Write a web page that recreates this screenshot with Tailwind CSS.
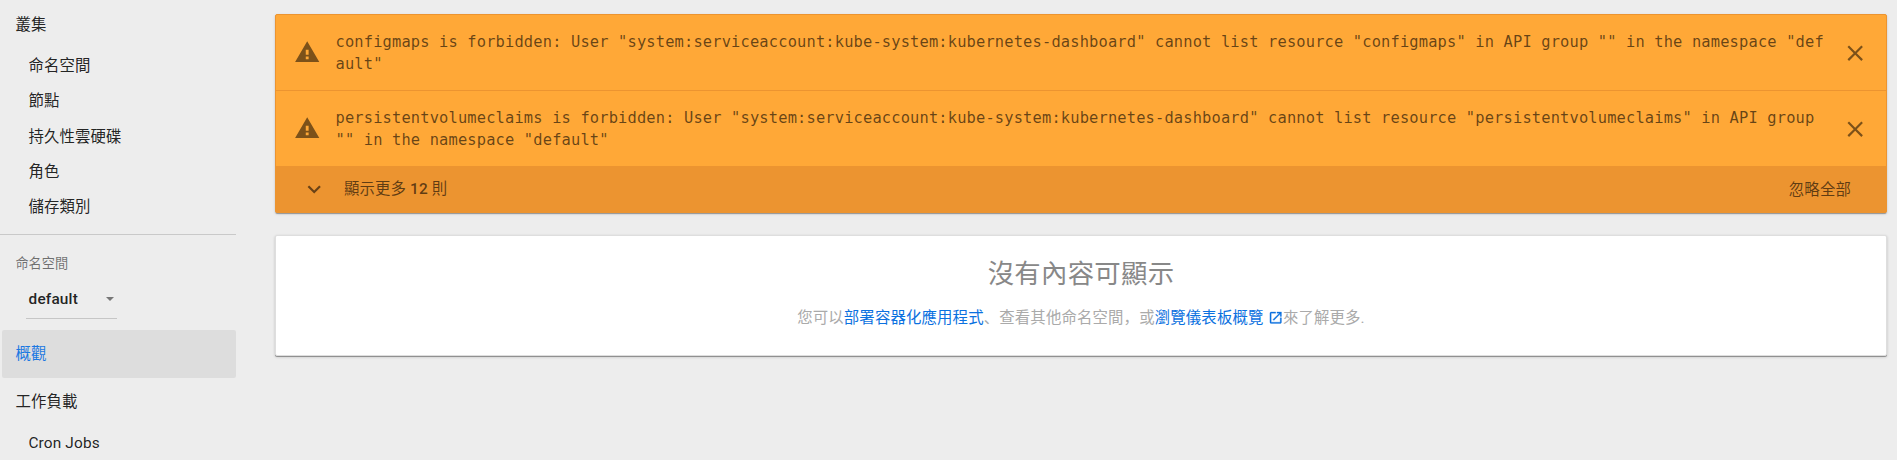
<!DOCTYPE html>
<html lang="zh">
<head>
<meta charset="utf-8">
<title>Kubernetes Dashboard</title>
<script src="https://cdn.jsdelivr.net/npm/@tailwindcss/browser@4"></script>
</head>
<body class="flex h-[460px] overflow-hidden bg-[#ededed] font-[Roboto,'Noto_Sans_CJK_SC',sans-serif] text-[15.4px] leading-[22px] tracking-[0.154px] text-black/87">
  <nav class="w-[236px] shrink-0">
    <a class="flex h-[48px] items-center pt-[2px] pl-[15.4px]">叢集</a>
    <a class="flex h-[35.2px] items-center pt-px pl-[28.4px]">命名空間</a>
    <a class="flex h-[35.2px] items-center pl-[28.4px]">節點</a>
    <a class="flex h-[35.2px] items-center pt-[2px] pl-[28.4px]">持久性雲硬碟</a>
    <a class="flex h-[35.2px] items-center pt-[2px] pl-[28.4px]">角色</a>
    <a class="flex h-[35.2px] items-center pt-[2px] pl-[28.4px]">儲存類別</a>
    <div class="mt-[10px] h-px bg-[#c9c9c9]"></div>
    <div class="mt-[18px] h-[22px] pl-[15.4px] text-[13.2px] tracking-normal text-black/54">命名空間</div>
    <div class="mt-[9px] ml-[26px] flex h-[35px] w-[91px] justify-between border-b border-[#c6c6c6] pt-[4px] pr-[3px] pl-[2.6px] font-medium">
      <span>default</span>
      <svg class="mt-[9px] h-[4px] w-[8px] fill-[#777]" viewBox="0 0 8 4"><path d="M0 0h8L4 4z"/></svg>
    </div>
    <a class="mt-[11px] ml-[2px] flex h-[48px] items-center rounded-[2px] bg-[#dddddd] pl-[13.4px] text-[#1a78e2]">概觀</a>
    <a class="flex h-[48px] items-center pl-[15.4px]">工作負載</a>
    <a class="flex h-[33.2px] items-center pl-[28.4px]">Cron Jobs</a>
  </nav>
  <main class="flex grow flex-col gap-[22px] pt-[14px] pr-[10px] pl-[39px]">
    <section class="h-[199px] rounded-[2px] border border-[#ec9430] bg-[#ffa837] text-black/60 shadow-[0_2px_1px_-1px_rgba(0,0,0,0.2),0_1px_1px_rgba(0,0,0,0.14),0_1px_3px_rgba(0,0,0,0.12)]">
      <div class="flex h-[76px] border-b border-[#ec9430]">
        <svg class="mt-[24.2px] ml-[17.9px] h-[26.4px] w-[26.4px] shrink-0 fill-[#7c5119]" viewBox="0 0 24 24"><path d="M1 21h22L12 2 1 21zm12.3-2.6h-2.6v-2.4h2.6v2.4zm0-4h-2.6v-4.6h2.6v4.6z"/></svg>
        <p class="mt-[16px] ml-[15.2px] w-[1489px] font-['DejaVu_Sans_Mono',monospace]">configmaps is forbidden: User "system:serviceaccount:kube-system:kubernetes-dashboard" cannot list resource "configmaps" in API group "" in the namespace "def<br>ault"</p>
        <svg class="mt-[24.5px] ml-[17.5px] h-[26.4px] w-[26.4px] shrink-0 fill-[#7c5119]" viewBox="0 0 24 24"><path d="M19 6.41L17.59 5 12 10.59 6.41 5 5 6.41 10.59 12 5 17.59 6.41 19 12 13.41 17.59 19 19 17.59 13.41 12z"/></svg>
      </div>
      <div class="flex h-[75px]">
        <svg class="mt-[24.2px] ml-[17.9px] h-[26.4px] w-[26.4px] shrink-0 fill-[#7c5119]" viewBox="0 0 24 24"><path d="M1 21h22L12 2 1 21zm12.3-2.6h-2.6v-2.4h2.6v2.4zm0-4h-2.6v-4.6h2.6v4.6z"/></svg>
        <p class="mt-[16px] ml-[15.2px] w-[1489px] font-['DejaVu_Sans_Mono',monospace]">persistentvolumeclaims is forbidden: User "system:serviceaccount:kube-system:kubernetes-dashboard" cannot list resource "persistentvolumeclaims" in API group<br>"" in the namespace "default"</p>
        <svg class="mt-[24.5px] ml-[17.5px] h-[26.4px] w-[26.4px] shrink-0 fill-[#7c5119]" viewBox="0 0 24 24"><path d="M19 6.41L17.59 5 12 10.59 6.41 5 5 6.41 10.59 12 5 17.59 6.41 19 12 13.41 17.59 19 19 17.59 13.41 12z"/></svg>
      </div>
      <div class="flex h-[46px] items-center bg-[#ec9430] pr-[35px] pl-[24.5px] font-medium">
        <svg class="mt-px h-[26.4px] w-[26.4px] fill-[#6a4216]" viewBox="0 0 24 24"><path d="M7.41 8.59L12 13.17l4.59-4.58L18 10l-6 6-6-6 1.41-1.41z"/></svg>
        <span class="ml-[17px]"><span class="font-normal">顯示更多</span> 12 <span class="font-normal">則</span></span>
        <span class="ml-auto pt-px font-normal">忽略全部</span>
      </div>
    </section>
    <section class="h-[121px] rounded-[2px] border border-[#dedede] bg-white text-center shadow-[0_1px_0_rgba(0,0,0,0.3),0_1px_3px_rgba(0,0,0,0.2)]">
      <h1 class="pt-[21px] text-[26.4px] leading-[35px] tracking-[0.264px] text-[#888]">沒有內容可顯示</h1>
      <p class="mt-[15px] text-[#aaa]">您可以<a class="text-[#0b71e0]">部署容器化應用程式</a>、查看其他命名空間，或<a class="text-[#0b71e0]">瀏覽儀表板概覽 <svg class="inline h-[15.4px] w-[15.4px] fill-current stroke-current stroke-[0.4] align-[-2px]" viewBox="0 0 24 24"><path d="M19 19H5V5h7V3H5c-1.11 0-2 .9-2 2v14c0 1.1.89 2 2 2h14c1.1 0 2-.9 2-2v-7h-2v7zM14 3v2h3.59l-9.83 9.83 1.41 1.41L19 6.41V10h2V3h-7z"/></svg></a>來了解更多.</p>
    </section>
  </main>
</body>
</html>
